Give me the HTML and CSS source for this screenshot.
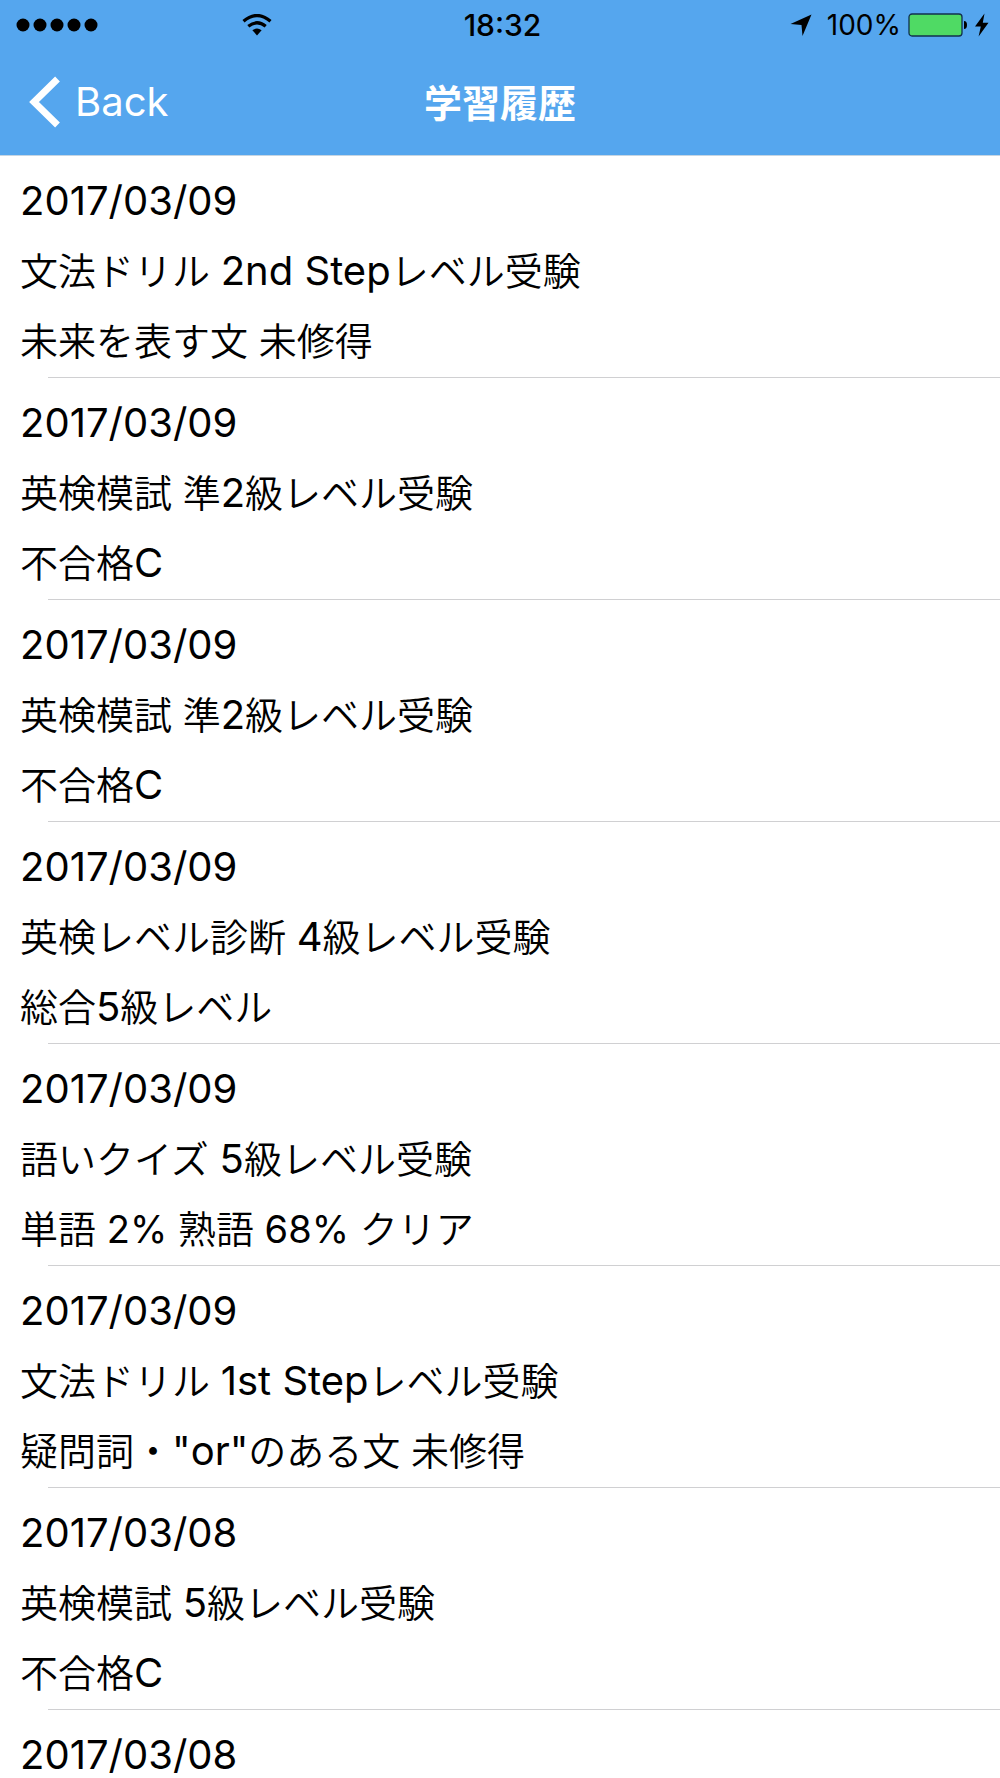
FILE: index.html
```html
<!DOCTYPE html>
<html lang="ja">
<head>
<meta charset="utf-8">
<meta name="viewport" content="width=device-width, initial-scale=1">
<title>学習履歴</title>
<link rel="stylesheet" href="styles.css">
</head>
<body>
<header class="header">
  <div class="status">
    <div class="status-left">
      <svg class="signal" width="82" height="14" viewBox="0 0 82 14" aria-hidden="true">
        <circle cx="7" cy="7" r="6.5"/><circle cx="24" cy="7" r="6.5"/><circle cx="41" cy="7" r="6.5"/><circle cx="58" cy="7" r="6.5"/><circle cx="75" cy="7" r="6.5"/>
      </svg>
      <svg width="30" height="22" viewBox="0 0 30 22" aria-hidden="true">
        <path d="M1.5 7.2Q15-4.200 28.500 7.200" fill="none" stroke="#000" stroke-width="3.200"/>
        <path d="M6.300 12.300Q15 5.200 23.700 12.300" fill="none" stroke="#000" stroke-width="3.200"/>
        <path d="M10.400 16.200Q15 13 19.600 16.200L15 21.500Z"/>
      </svg>
    </div>
    <time class="clock">18:32</time>
    <div class="status-right">
      <svg width="22" height="22" viewBox="0 0 22 22" aria-hidden="true"><path d="M21.500.5 12.500 22 11.500 11 .5 10Z"/></svg>
      <span class="percent">100%</span>
      <svg class="battery" width="60" height="24" viewBox="0 0 60 24" aria-hidden="true">
        <rect x="1" y="1" width="53" height="22" rx="3" fill="#4fda64" stroke="#12304d" stroke-width="1.300"/>
        <path d="M56 8q3 0 3 4t-3 4Z"/>
      </svg>
      <svg width="14" height="24" viewBox="0 0 14 24" aria-hidden="true"><path d="M9.500.5 0 13.500H5.800L3.600 23.500 13.500 9.800H7.800Z"/></svg>
    </div>
  </div>
  <nav class="nav">
    <a class="back" href="#">
      <svg width="32" height="52" viewBox="0 0 32 52" aria-hidden="true"><path d="M28.500 3 5 26 28.500 49" fill="none" stroke="#fff" stroke-width="6.800"/></svg>
      <span>Back</span>
    </a>
    <h1 class="title">学習履歴</h1>
  </nav>
</header>
<main>
  <ul class="history">
    <li class="entry"><time>2017/03/09</time><p>文法ドリル <span class="latin">2nd Step</span>レベル受験</p><p>未来を表す文 未修得</p></li>
    <li class="entry"><time>2017/03/09</time><p>英検模試 準<span class="latin">2</span>級レベル受験</p><p>不合格<span class="latin">C</span></p></li>
    <li class="entry"><time>2017/03/09</time><p>英検模試 準<span class="latin">2</span>級レベル受験</p><p>不合格<span class="latin">C</span></p></li>
    <li class="entry"><time>2017/03/09</time><p>英検レベル診断 <span class="latin">4</span>級レベル受験</p><p>総合<span class="latin">5</span>級レベル</p></li>
    <li class="entry"><time>2017/03/09</time><p>語いクイズ <span class="latin">5</span>級レベル受験</p><p>単語 <span class="rate">2%</span> 熟語 <span class="rate">68%</span> クリア</p></li>
    <li class="entry"><time>2017/03/09</time><p>文法ドリル <span class="latin">1st Step</span>レベル受験</p><p>疑問詞・<span class="latin">"or"</span>のある文 未修得</p></li>
    <li class="entry"><time>2017/03/08</time><p>英検模試 <span class="latin">5</span>級レベル受験</p><p>不合格<span class="latin">C</span></p></li>
    <li class="entry"><time>2017/03/08</time></li>
  </ul>
</main>
</body>
</html>
```

FILE: styles.css
```css
* { box-sizing: border-box; }
body {
  margin: 0;
  background: #fff;
  color: #000;
  font-family: Inter, "Noto Sans CJK JP", sans-serif;
}
svg { display: block; flex: none; }
.header {
  background: #55a6ee;
  border-bottom: 1px solid #c5d5e3;
}
.status {
  display: grid;
  grid-template-columns: 1fr auto 1fr;
  align-items: center;
  height: 50px;
  padding: 0 11px 0 16px;
}
.status-left, .status-right { display: flex; align-items: center; }
.status-left { gap: 144px; }
.status-right { justify-content: flex-end; gap: 7px; }
.clock { font-size: 30px; font-weight: 500; }
.percent { font-size: 28px; margin-left: 8px; }
.nav {
  display: grid;
  grid-template-columns: 1fr auto 1fr;
  align-items: center;
  height: 105px;
  padding: 0 29px 2px;
}
.back {
  display: flex;
  align-items: center;
  gap: 14px;
  color: #fff;
  font-size: 40px;
  font-weight: 400;
  text-decoration: none;
}
.title {
  margin: 0;
  padding-bottom: 2px;
  color: #fff;
  font-size: 38px;
  font-weight: 700;
}
.history { margin: 0; padding: 0; list-style: none; }
.entry {
  padding: 10px 20px 2px;
  font-size: 38px;
  line-height: 70px;
  /* separator starts after the 48px inset */
  background: linear-gradient(#d0d0d2, #d0d0d2) 48px 100% / 100% 1px no-repeat;
}
.entry time { display: block; font-size: 40px; }
.entry p {
  margin: 0;
  font-family: Inter, "Noto Sans CJK JP DemiLight", "Noto Sans CJK JP", sans-serif;
  font-weight: 350;
}
.entry .latin { font-size: 40px; font-weight: 400; line-height: 1; }
.entry .rate { font-weight: 400; }
```
